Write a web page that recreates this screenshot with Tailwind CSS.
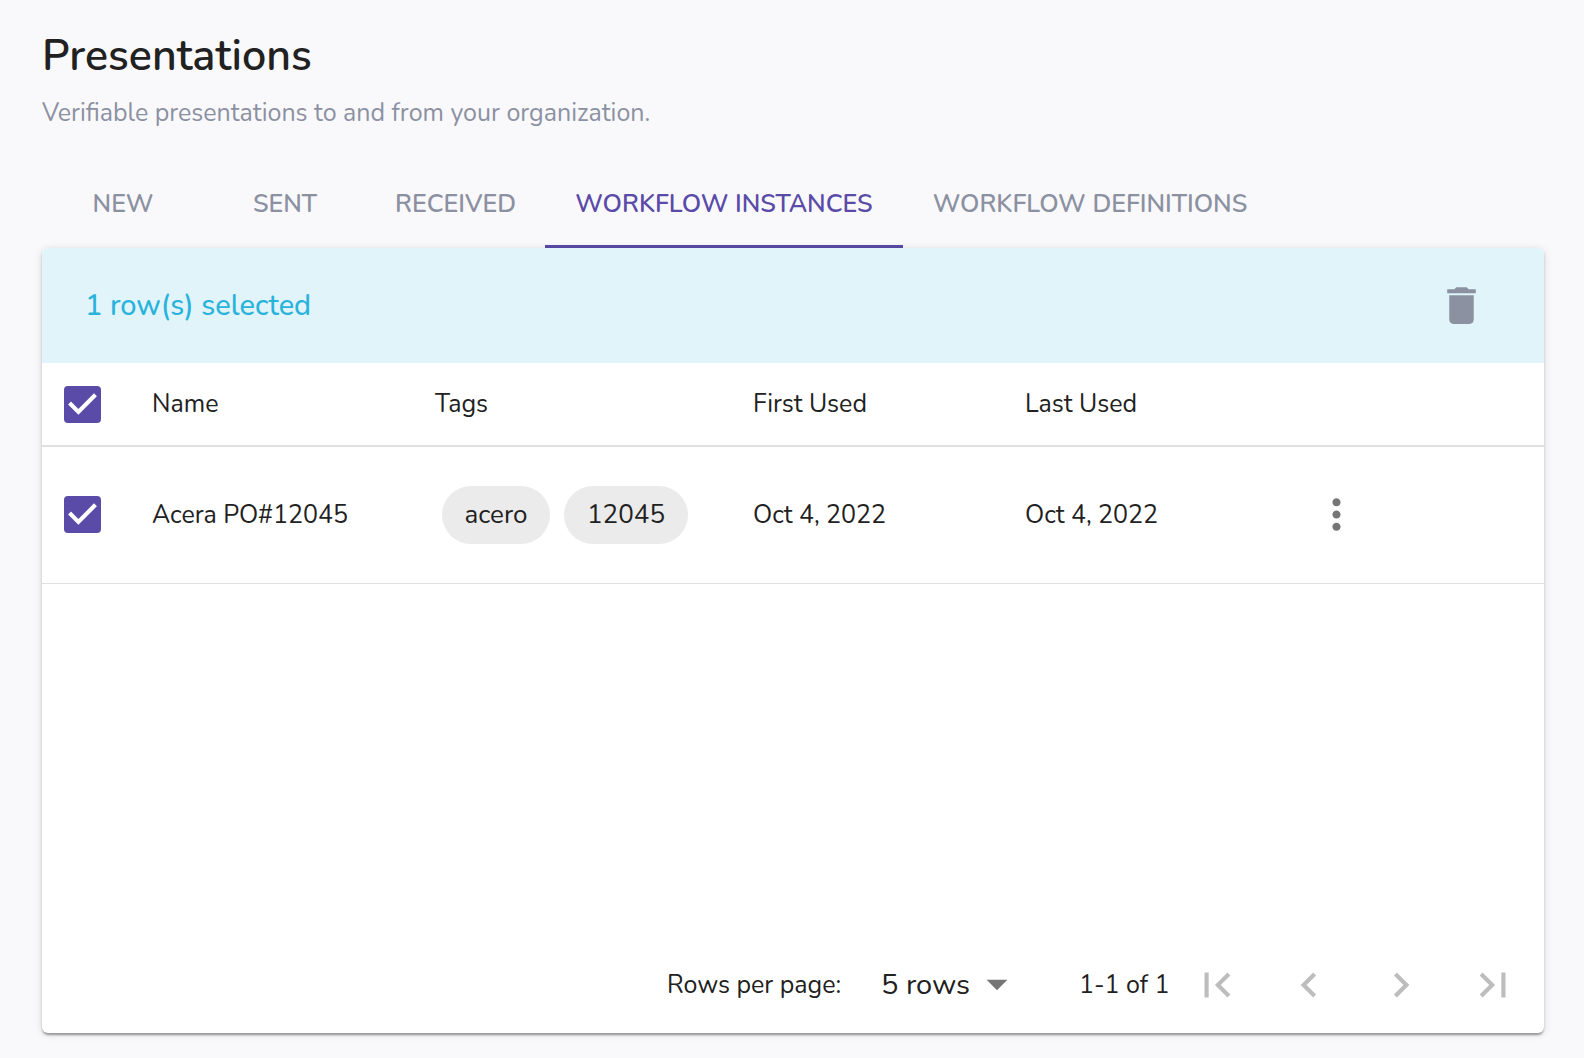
<!DOCTYPE html>
<html lang="en">
<head>
    <meta charset="UTF-8">
    <meta name="viewport" content="width=device-width, initial-scale=1.0">
    <title>Presentations</title>
    <script src="https://cdn.jsdelivr.net/npm/@tailwindcss/browser@4"></script>
</head>
<body class="bg-[#f9f9fb] font-['Nunito','Lato',sans-serif] text-[25px] leading-9 text-[#212121]">
    <div class="flex min-h-screen flex-col pt-[26px] pr-10 pb-[25px] pl-[42px]">
        <header>
            <h1 class="text-[43px] leading-[60px] font-semibold">Presentations</h1>
            <p class="mt-[9px] text-[#8c91a2]">Verifiable presentations to and from your organization.</p>
        </header>

        <nav class="mt-[29px] flex h-[88px] font-semibold text-[#8c91a2]">
            <a href="#new" class="flex w-[162px] items-center justify-center">NEW</a>
            <a href="#sent" class="flex w-[162px] items-center justify-center">SENT</a>
            <a href="#received" class="flex w-[179px] items-center justify-center">RECEIVED</a>
            <a href="#instances" aria-current="page" class="flex w-[358px] items-center justify-center text-[#5a4ba8] shadow-[inset_0_-3px_0_#5a4ba8]">WORKFLOW INSTANCES</a>
            <a href="#definitions" class="flex w-[374px] items-center justify-center">WORKFLOW DEFINITIONS</a>
        </nav>

        <main class="flex grow flex-col rounded-md bg-white shadow-[0_3px_2px_-1px_rgba(0,0,0,0.25),0_2px_3px_rgba(0,0,0,0.14),0_1px_8px_rgba(0,0,0,0.12)]">
            <!-- Selection toolbar -->
            <div class="flex h-[115px] items-center justify-between rounded-t-md bg-[#e1f4fa] pr-[58px] pl-[43px]">
                <h2 class="text-[29px] font-medium text-[#29b3dc]">1 row(s) selected</h2>
                <button type="button" aria-label="Delete" class="text-[#8c91a2]">
                    <svg class="size-[49px]" viewBox="0 0 24 24" fill="currentColor"><path d="M6 19c0 1.1.9 2 2 2h8c1.1 0 2-.9 2-2V7H6v12zM19 4h-3.500l-1-1h-5l-1 1H5v2h14V4z"/></svg>
                </button>
            </div>

            <table class="w-full table-fixed text-left">
                <colgroup>
                    <col class="w-[110px]">
                    <col class="w-[283px]">
                    <col class="w-[318px]">
                    <col class="w-[272px]">
                    <col class="w-[272px]">
                    <col>
                </colgroup>
                <thead>
                    <tr class="h-[83px] border-b-2 border-[#e0e0e0]">
                        <th class="pl-[22px]">
                            <label class="relative block size-[37px]">
                                <input type="checkbox" checked aria-label="Select all rows" class="peer block size-full appearance-none rounded border-2 border-gray-500 checked:border-[#5a4ba8] checked:bg-[#5a4ba8]">
                                <svg class="pointer-events-none absolute inset-0 hidden size-full text-white peer-checked:block" viewBox="3 3 18 18" fill="currentColor"><path d="M10 17l-5-5 1.410-1.410L10 14.170l7.590-7.590L19 8l-9 9z"/></svg>
                            </label>
                        </th>
                        <th class="font-normal">Name</th>
                        <th class="font-normal">Tags</th>
                        <th class="font-normal">First Used</th>
                        <th class="font-normal">Last Used</th>
                        <th></th>
                    </tr>
                </thead>
                <tbody>
                    <tr class="h-[137px] border-b border-[#e0e0e0]">
                        <td class="pl-[22px]">
                            <label class="relative block size-[37px]">
                                <input type="checkbox" checked aria-label="Select Acera PO#12045" class="peer block size-full appearance-none rounded border-2 border-gray-500 checked:border-[#5a4ba8] checked:bg-[#5a4ba8]">
                                <svg class="pointer-events-none absolute inset-0 hidden size-full text-white peer-checked:block" viewBox="3 3 18 18" fill="currentColor"><path d="M10 17l-5-5 1.410-1.410L10 14.170l7.590-7.590L19 8l-9 9z"/></svg>
                            </label>
                        </td>
                        <td>Acera PO#12045</td>
                        <td>
                            <div class="flex gap-[14px] pl-[7px] text-[26px]">
                                <span class="flex h-[58px] w-[108px] items-center justify-center rounded-full bg-[#ebebeb]">acero</span>
                                <span class="flex h-[58px] w-[124px] items-center justify-center rounded-full bg-[#ebebeb]">12045</span>
                            </div>
                        </td>
                        <td>Oct 4, 2022</td>
                        <td>Oct 4, 2022</td>
                        <td class="pl-[15px]">
                            <button type="button" aria-label="Row actions" class="block text-[#757575]">
                                <svg class="size-[49px]" viewBox="0 0 24 24" fill="currentColor"><path d="M12 8c1.100 0 2-.9 2-2s-.9-2-2-2-2 .9-2 2 .9 2 2 2zm0 2c-1.100 0-2 .9-2 2s.9 2 2 2 2-.9 2-2-.9-2-2-2zm0 6c-1.100 0-2 .9-2 2s.9 2 2 2 2-.9 2-2-.9-2-2-2z"/></svg>
                            </button>
                        </td>
                    </tr>
                </tbody>
            </table>

            <!-- Pagination -->
            <footer class="mt-auto flex h-24 items-center justify-end pr-[5px]">
                <label for="rows-per-page" class="w-[214px]">Rows per page:</label>
                <div class="relative mr-[61px] w-[137px]">
                    <select id="rows-per-page" class="block w-full appearance-none text-[29px]">
                        <option>5 rows</option>
                        <option>10 rows</option>
                        <option>20 rows</option>
                    </select>
                    <svg class="pointer-events-none absolute -top-2 -right-1 size-[50px] text-[#757575]" viewBox="0 0 24 24" fill="currentColor"><path d="M7 10l5 5 5-5z"/></svg>
                </div>
                <span class="w-[92px] whitespace-nowrap">1-1 of 1</span>
                <div class="flex text-[#bdbdbd]">
                    <button type="button" disabled aria-label="First page" class="flex w-[92px] justify-center">
                        <svg class="size-[50px]" viewBox="0 0 24 24" fill="currentColor"><path d="M18.410 16.590L13.820 12l4.590-4.590L17 6l-6 6 6 6zM6 6h2v12H6z"/></svg>
                    </button>
                    <button type="button" disabled aria-label="Previous page" class="flex w-[92px] justify-center">
                        <svg class="size-[50px]" viewBox="0 0 24 24" fill="currentColor"><path d="M15.410 16.590L10.830 12l4.580-4.590L14 6l-6 6 6 6z"/></svg>
                    </button>
                    <button type="button" disabled aria-label="Next page" class="flex w-[92px] justify-center">
                        <svg class="size-[50px]" viewBox="0 0 24 24" fill="currentColor"><path d="M8.590 16.590L13.170 12 8.590 7.410 10 6l6 6-6 6z"/></svg>
                    </button>
                    <button type="button" disabled aria-label="Last page" class="flex w-[92px] justify-center">
                        <svg class="size-[50px]" viewBox="0 0 24 24" fill="currentColor"><path d="M5.590 7.410L10.180 12l-4.590 4.590L7 18l6-6-6-6zM16 6h2v12h-2z"/></svg>
                    </button>
                </div>
            </footer>
        </main>
    </div>
</body>
</html>
